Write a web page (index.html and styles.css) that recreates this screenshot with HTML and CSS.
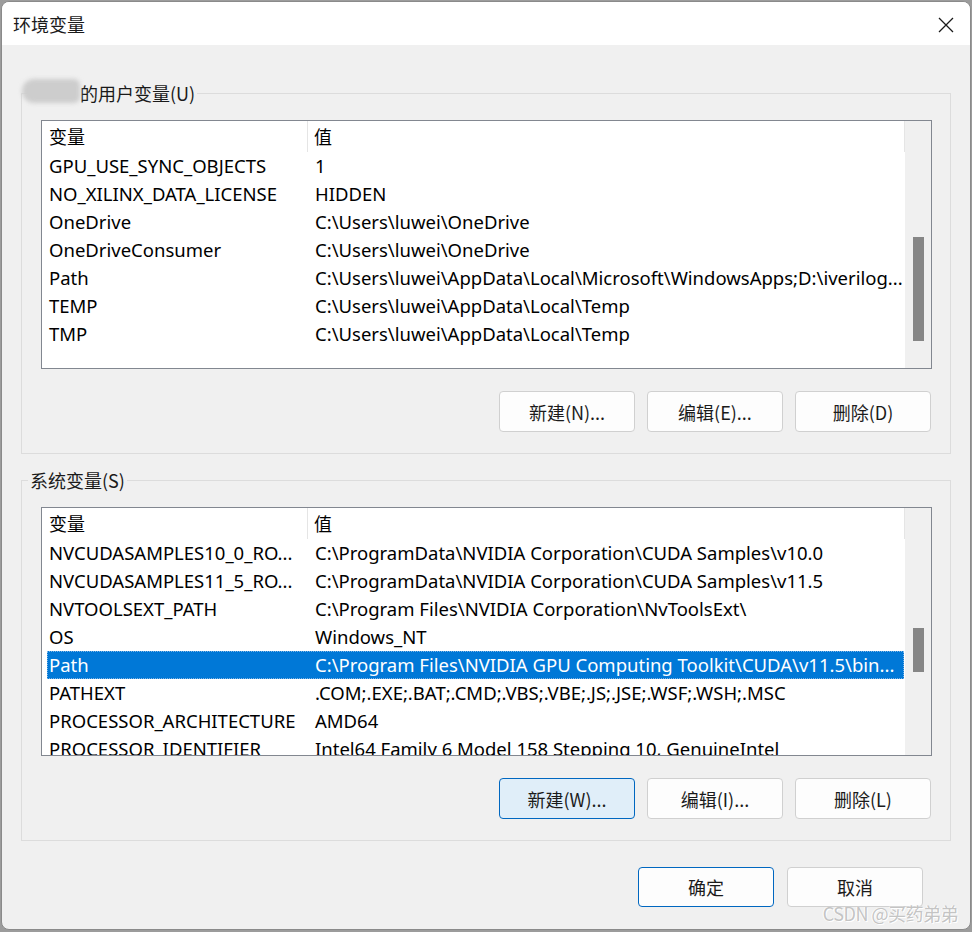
FILE: index.html
```html
<!DOCTYPE html>
<html>

<head>
    <title>环境变量</title>
    <meta charset="utf-8">
    <link rel="stylesheet" href="styles.css">
</head>

<body>
    <div class="window">
        <div class="titlebar">
            <span class="title">环境变量</span>
            <svg class="close" width="16" height="16" viewBox="0 0 16 16">
                <path d="M1 1 L15 15 M15 1 L1 15" stroke="#1a1a1a" stroke-width="1.3" fill="none" />
            </svg>
        </div>

        <!-- 用户变量 -->
        <fieldset class="group">
            <legend><span class="blur-name"></span>的用户变量(U)</legend>
            <div class="list">
                <div class="list-body">
                    <div class="list-head">
                        <div class="col-name">变量</div>
                        <div class="col-value">值</div>
                    </div>
                    <div class="row">
                        <div class="col-name">GPU_USE_SYNC_OBJECTS</div>
                        <div class="col-value">1</div>
                    </div>
                    <div class="row">
                        <div class="col-name">NO_XILINX_DATA_LICENSE</div>
                        <div class="col-value">HIDDEN</div>
                    </div>
                    <div class="row">
                        <div class="col-name">OneDrive</div>
                        <div class="col-value">C:\Users\luwei\OneDrive</div>
                    </div>
                    <div class="row">
                        <div class="col-name">OneDriveConsumer</div>
                        <div class="col-value">C:\Users\luwei\OneDrive</div>
                    </div>
                    <div class="row">
                        <div class="col-name">Path</div>
                        <div class="col-value">C:\Users\luwei\AppData\Local\Microsoft\WindowsApps;D:\iverilog...</div>
                    </div>
                    <div class="row">
                        <div class="col-name">TEMP</div>
                        <div class="col-value">C:\Users\luwei\AppData\Local\Temp</div>
                    </div>
                    <div class="row">
                        <div class="col-name">TMP</div>
                        <div class="col-value">C:\Users\luwei\AppData\Local\Temp</div>
                    </div>
                </div>
                <div class="scroll">
                    <div class="thumb thumb-user"></div>
                </div>
            </div>
            <div class="btn-row">
                <button class="btn">新建(N)...</button>
                <button class="btn">编辑(E)...</button>
                <button class="btn">删除(D)</button>
            </div>
        </fieldset>

        <!-- 系统变量 -->
        <fieldset class="group group-sys">
            <legend>系统变量(S)</legend>
            <div class="list">
                <div class="list-body">
                    <div class="list-head">
                        <div class="col-name">变量</div>
                        <div class="col-value">值</div>
                    </div>
                    <div class="row">
                        <div class="col-name">NVCUDASAMPLES10_0_RO...</div>
                        <div class="col-value">C:\ProgramData\NVIDIA Corporation\CUDA Samples\v10.0</div>
                    </div>
                    <div class="row">
                        <div class="col-name">NVCUDASAMPLES11_5_RO...</div>
                        <div class="col-value">C:\ProgramData\NVIDIA Corporation\CUDA Samples\v11.5</div>
                    </div>
                    <div class="row">
                        <div class="col-name">NVTOOLSEXT_PATH</div>
                        <div class="col-value">C:\Program Files\NVIDIA Corporation\NvToolsExt\</div>
                    </div>
                    <div class="row">
                        <div class="col-name">OS</div>
                        <div class="col-value">Windows_NT</div>
                    </div>
                    <div class="row selected">
                        <div class="col-name">Path</div>
                        <div class="col-value">C:\Program Files\NVIDIA GPU Computing Toolkit\CUDA\v11.5\bin...</div>
                    </div>
                    <div class="row">
                        <div class="col-name">PATHEXT</div>
                        <div class="col-value">.COM;.EXE;.BAT;.CMD;.VBS;.VBE;.JS;.JSE;.WSF;.WSH;.MSC</div>
                    </div>
                    <div class="row">
                        <div class="col-name">PROCESSOR_ARCHITECTURE</div>
                        <div class="col-value">AMD64</div>
                    </div>
                    <div class="row">
                        <div class="col-name">PROCESSOR_IDENTIFIER</div>
                        <div class="col-value">Intel64 Family 6 Model 158 Stepping 10, GenuineIntel</div>
                    </div>
                </div>
                <div class="scroll">
                    <div class="thumb thumb-sys"></div>
                </div>
            </div>
            <div class="btn-row">
                <button class="btn btn-hover">新建(W)...</button>
                <button class="btn">编辑(I)...</button>
                <button class="btn">删除(L)</button>
            </div>
        </fieldset>

        <div class="footer">
            <button class="btn btn-default">确定</button>
            <button class="btn">取消</button>
        </div>

        <div class="watermark">CSDN @买药弟弟</div>
    </div>
</body>

</html>
```
FILE: styles.css
```css
body {
    margin: 0;
    background-color: #9c9c9c;
    font-family: "Noto Sans", "Noto Sans CJK SC", sans-serif;
    color: #000;
}

.window {
    position: relative;
    margin: 1px 1px 0 1px;
    height: 929px;
    box-sizing: border-box;
    border: 1px solid #8a8a8a;
    border-radius: 8px;
    background-color: #f0f0f0;
    overflow: hidden;
}

.titlebar {
    display: flex;
    align-items: center;
    justify-content: space-between;
    height: 43px;
    padding: 0 16px 0 11px;
    background-color: #fff;
}

.title {
    font-family: "Noto Sans CJK SC", sans-serif;
    font-size: 18px;
    color: #1a1a1a;
}

.close {
    margin-top: 2px;
}

.group {
    margin: 36px 19px 0 19px;
    padding: 0 18px 21px 19px;
    border: 1px solid #dcdcdc;
}

.group-sys {
    margin-top: 14px;
}

.group legend {
    margin-left: -13px;
    padding: 0 2px;
    height: 24px;
    line-height: 24px;
    font-family: "Noto Sans CJK SC", sans-serif;
    font-size: 18px;
    color: #1a1a1a;
}

.blur-name {
    display: inline-block;
    vertical-align: top;
    width: 58px;
    height: 24px;
    margin-left: -8px;
    margin-top: -2px;
    border-radius: 12px 6px 6px 12px;
    background-color: #cdcdcd;
    filter: blur(2px);
}

.list {
    display: flex;
    height: 249px;
    margin-top: 15px;
    box-sizing: border-box;
    border: 1px solid #828790;
    background-color: #fff;
}

.list-body {
    flex: 1;
    overflow: hidden;
    font-size: 18.5px;
}

.list-head {
    display: flex;
    height: 31px;
    line-height: 31px;
    font-size: 18px;
}

.list-head .col-name {
    width: 266px;
    padding-left: 7px;
    box-sizing: border-box;
    border-right: 1px solid #e5e5e5;
    font-family: "Noto Sans CJK SC", sans-serif;
}

.list-head .col-value {
    flex: 1;
    padding-left: 6px;
    border-right: 1px solid #e5e5e5;
    font-family: "Noto Sans CJK SC", sans-serif;
}

.row {
    display: flex;
    height: 28px;
    line-height: 28px;
    margin: 0 1px 0 5px;
    white-space: nowrap;
}

.row .col-name {
    width: 262px;
    padding-left: 2px;
    box-sizing: border-box;
    overflow: hidden;
}

.row .col-value {
    flex: 1;
    padding-left: 6px;
    overflow: hidden;
    text-overflow: ellipsis;
}

.row.selected {
    background-color: #0078d7;
    color: #fff;
    outline: 1px dotted #7fb5e6;
    outline-offset: -1px;
}

.scroll {
    width: 26px;
    background-color: #f0f0f0;
}

.thumb {
    width: 11px;
    margin: 0 auto;
    background-color: #868686;
}

.thumb-user {
    margin-top: 116px;
    height: 104px;
}

.thumb-sys {
    margin-top: 120px;
    height: 44px;
}

.btn-row {
    display: flex;
    justify-content: flex-end;
    gap: 12px;
    margin: 22px 1px 0 0;
}

.btn {
    width: 136px;
    height: 41px;
    padding: 0;
    border: 1px solid #d0d0d0;
    border-radius: 4px;
    background-color: #fdfdfd;
    font-family: "Noto Sans CJK SC", sans-serif;
    font-size: 18px;
    color: #1b1b1b;
    outline: none;
}

.btn-hover {
    border-color: #0067c0;
    background-color: #e0eef9;
}

.btn-default {
    border-color: #0067c0;
}

.footer {
    display: flex;
    justify-content: flex-end;
    gap: 13px;
    margin: 26px 47px 0 0;
}

.footer .btn {
    height: 40px;
}

.watermark {
    position: absolute;
    right: 12px;
    bottom: 3px;
    font-family: "Noto Sans CJK SC", sans-serif;
    font-size: 18px;
    color: #c4c4c4;
    text-shadow: 1px 1px 0 #fff, -1px 0 0 #fff;
    letter-spacing: -0.5px;
}
```
